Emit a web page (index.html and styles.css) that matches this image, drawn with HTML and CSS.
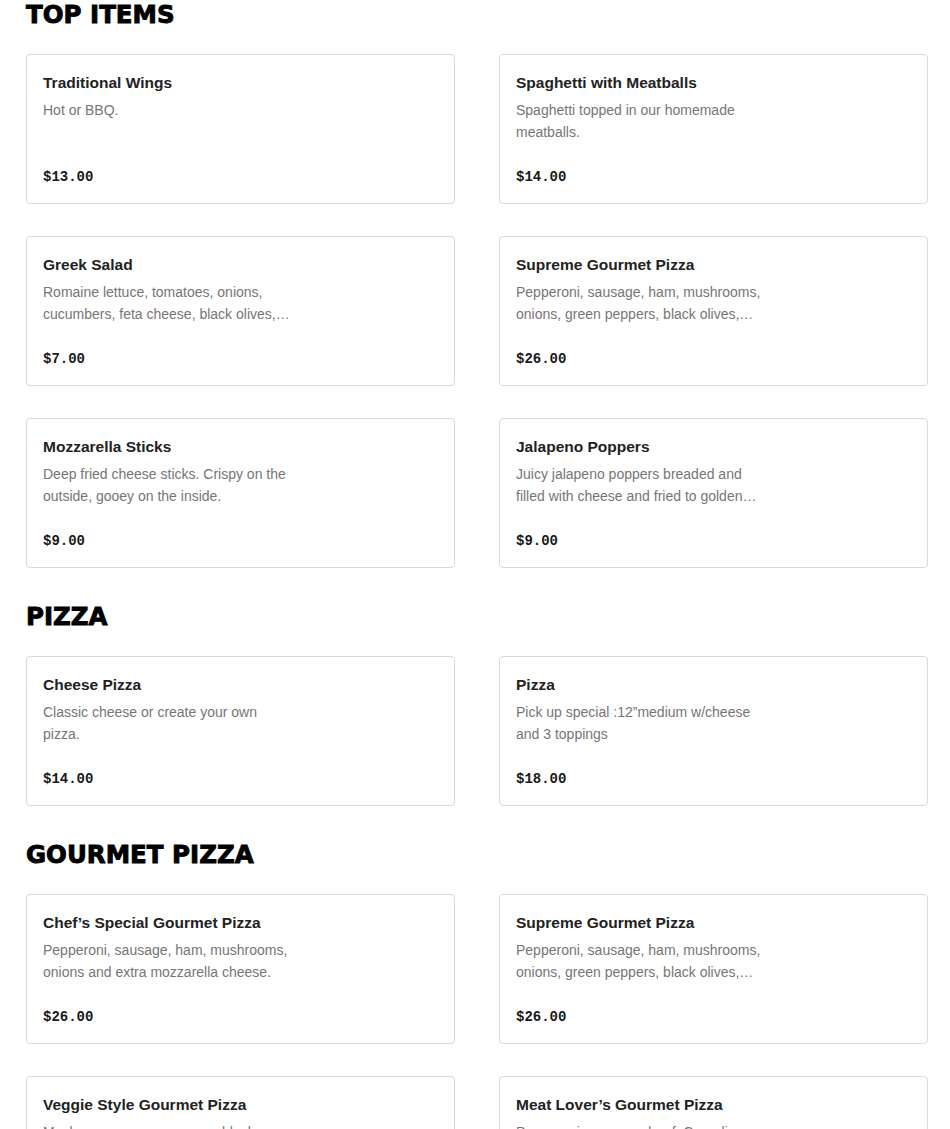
FILE: index.html
```html
<!DOCTYPE html>
<html>
<head>
<meta charset="utf-8">
<link rel="stylesheet" href="styles.css">
</head>
<body>
<main class="menu">
  <section class="section">
    <h2 class="section-title">TOP ITEMS</h2>
    <div class="grid">
      <div class="card"><div class="name">Traditional Wings</div><div class="desc">Hot or BBQ.</div><div class="price">$13.00</div></div>
      <div class="card"><div class="name">Spaghetti with Meatballs</div><div class="desc">Spaghetti topped in our homemade meatballs.</div><div class="price">$14.00</div></div>
      <div class="card"><div class="name">Greek Salad</div><div class="desc">Romaine lettuce, tomatoes, onions, cucumbers, feta cheese, black olives, pepperoncini and Greek dressing.</div><div class="price">$7.00</div></div>
      <div class="card"><div class="name">Supreme Gourmet Pizza</div><div class="desc">Pepperoni, sausage, ham, mushrooms, onions, green peppers, black olives, and extra cheese.</div><div class="price">$26.00</div></div>
      <div class="card"><div class="name">Mozzarella Sticks</div><div class="desc">Deep fried cheese sticks. Crispy on the outside, gooey on the inside.</div><div class="price">$9.00</div></div>
      <div class="card"><div class="name">Jalapeno Poppers</div><div class="desc">Juicy jalapeno poppers breaded and filled with cheese and fried to golden perfection.</div><div class="price">$9.00</div></div>
    </div>
  </section>
  <section class="section">
    <h2 class="section-title">PIZZA</h2>
    <div class="grid">
      <div class="card"><div class="name">Cheese Pizza</div><div class="desc">Classic cheese or create your own pizza.</div><div class="price">$14.00</div></div>
      <div class="card"><div class="name">Pizza</div><div class="desc">Pick up special :12”medium w/cheese and 3 toppings</div><div class="price">$18.00</div></div>
    </div>
  </section>
  <section class="section">
    <h2 class="section-title">GOURMET PIZZA</h2>
    <div class="grid">
      <div class="card"><div class="name">Chef’s Special Gourmet Pizza</div><div class="desc">Pepperoni, sausage, ham, mushrooms, onions and extra mozzarella cheese.</div><div class="price">$26.00</div></div>
      <div class="card"><div class="name">Supreme Gourmet Pizza</div><div class="desc">Pepperoni, sausage, ham, mushrooms, onions, green peppers, black olives, and extra cheese.</div><div class="price">$26.00</div></div>
      <div class="card"><div class="name">Veggie Style Gourmet Pizza</div><div class="desc">Mushrooms, green peppers, black olives, onions, tomatoes and extra cheese.</div><div class="price">$24.00</div></div>
      <div class="card"><div class="name">Meat Lover’s Gourmet Pizza</div><div class="desc">Pepperoni, sausage, beef, Canadian bacon, ham and extra cheese.</div><div class="price">$28.00</div></div>
    </div>
  </section>
</main>
</body>
</html>
```

FILE: styles.css
```css
html, body {
  margin: 0;
  padding: 0;
  background: #ffffff;
}

body {
  font-family: "Liberation Sans", Arial, sans-serif;
  color: #191919;
}

.menu {
  width: 902px;
  padding-left: 26px;
  display: flex;
  flex-direction: column;
  gap: 34px;
}

.section-title {
  margin: 0 0 24px 0;
  font-family: "DejaVu Sans", sans-serif;
  font-weight: bold;
  font-size: 24.5px;
  line-height: 30px;
  color: #000000;
  -webkit-text-stroke: 0.9px #000000;
}

.grid {
  display: grid;
  grid-template-columns: 429px 429px;
  column-gap: 44px;
  row-gap: 32px;
}

.card {
  border: 1px solid #d9d9d9;
  border-radius: 4px;
  padding: 16px 16px 15px 16px;
  display: flex;
  flex-direction: column;
}

.name {
  font-size: 15.5px;
  font-weight: bold;
  line-height: 24px;
  color: #222222;
  margin-bottom: 4px;
}

.desc {
  width: 250px;
  font-size: 14px;
  line-height: 22px;
  color: #767676;
  height: 44px;
  display: -webkit-box;
  -webkit-line-clamp: 2;
  -webkit-box-orient: vertical;
  overflow: hidden;
  margin-bottom: 23px;
}

.price {
  font-family: "Liberation Mono", "Courier New", monospace;
  font-weight: bold;
  font-size: 14px;
  line-height: 22px;
  color: #191919;
}
```
